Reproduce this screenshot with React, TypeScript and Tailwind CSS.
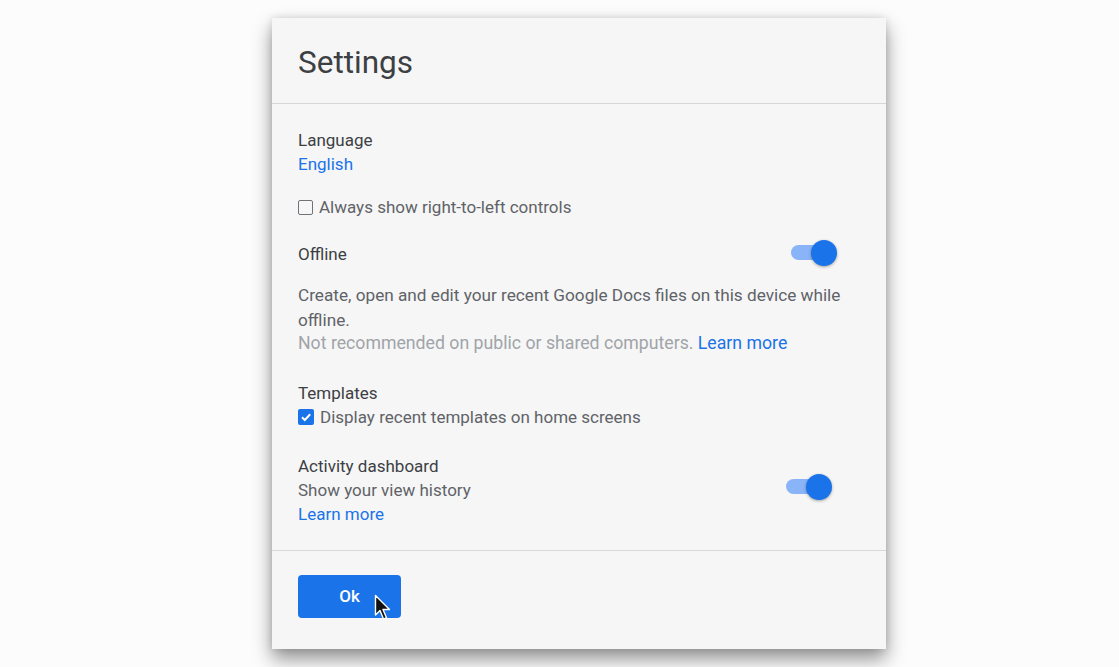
import React from "react";

function Toggle({ className = "" }: { className?: string }) {
  return (
    <div className={`relative h-[26px] w-[46px] ${className}`}>
      <div className="absolute left-0 top-[5px] h-[15px] w-[40px] rounded-full bg-[#8ab4f8]" />
      <div className="absolute right-0 top-0 h-[26px] w-[26px] rounded-full bg-[#1a73e8] shadow-[0_1px_3px_rgba(0,0,0,0.35)]" />
    </div>
  );
}

function Cursor() {
  return (
    <svg width="18" height="28" viewBox="0 0 18 28" className="absolute left-[76px] top-[19px]">
      <path
        d="M1.5 1.5 L1.5 21 L6 16.5 L9.5 25 L12.5 23.8 L9 15.5 L15.5 15.5 Z"
        fill="#111"
        stroke="#fff"
        strokeWidth="1.4"
        strokeLinejoin="round"
      />
    </svg>
  );
}

export default function App() {
  return (
    <div
      className="h-[667px] w-full overflow-hidden bg-[#fcfcfc] pl-[272px] pt-[18px]"
      style={{ fontFamily: "Roboto, 'Liberation Sans', sans-serif" }}
    >
      <div className="flex h-[631px] w-[614px] flex-col bg-[#f6f6f6] shadow-[0_10px_18px_rgba(0,0,0,0.42),0_0_8px_rgba(0,0,0,0.12)]">
        <div className="border-b border-[#d6d6d6] px-[26px] pb-[22px] pt-[27px]">
          <h1 className="text-[31.5px] leading-[36px] text-[#3c4043]">Settings</h1>
        </div>

        <div className="flex-1 border-b border-[#d9d9d9] px-[26px] pt-[24px] text-[17px] leading-[24px]">
          <div className="text-[#3c4043]">Language</div>
          <div className="text-[#1a73e8]">English</div>

          <label className="mt-[19px] flex items-center gap-[6px] text-[#5f6368]">
            <span className="h-[15px] w-[15px] rounded-[2px] border-[1.5px] border-[#6f7378]" />
            <span>Always show right-to-left controls</span>
          </label>

          <div className="mt-[23px] flex items-center justify-between">
            <span className="text-[#3c4043]">Offline</span>
            <Toggle className="mr-[23px] -mt-[3px]" />
          </div>

          <p className="mt-[17px] text-[17.2px] leading-[25px] text-[#5f6368]">
            Create, open and edit your recent Google Docs files on this device while offline.
          </p>
          <p className="text-[17.7px] leading-[20px] text-[#a0a4a8]">
            Not recommended on public or shared computers.{" "}
            <span className="text-[#1a73e8]">Learn more</span>
          </p>

          <div className="mt-[28px] text-[#3c4043]">Templates</div>
          <label className="flex items-center gap-[6px] text-[#5f6368]">
            <span className="flex h-[16px] w-[16px] items-center justify-center rounded-[2px] bg-[#1a73e8]">
              <svg width="12" height="12" viewBox="0 0 12 12">
                <path d="M2 6.2 L4.8 9 L10.2 3.3" fill="none" stroke="#fff" strokeWidth="2" />
              </svg>
            </span>
            <span>Display recent templates on home screens</span>
          </label>

          <div className="mt-[25px] flex items-center justify-between">
            <div>
              <div className="text-[#3c4043]">Activity dashboard</div>
              <div className="text-[#5f6368]">Show your view history</div>
              <div className="text-[#1a73e8]">Learn more</div>
            </div>
            <Toggle className="mr-[28px] -mt-[6px]" />
          </div>
        </div>

        <div className="h-[98px] px-[26px] pt-[24px]">
          <div className="relative">
            <button className="h-[43px] w-[103px] rounded-[4px] bg-[#1a73e8] text-[17px] font-medium text-white">
              Ok
            </button>
            <Cursor />
          </div>
        </div>
      </div>
    </div>
  );
}
